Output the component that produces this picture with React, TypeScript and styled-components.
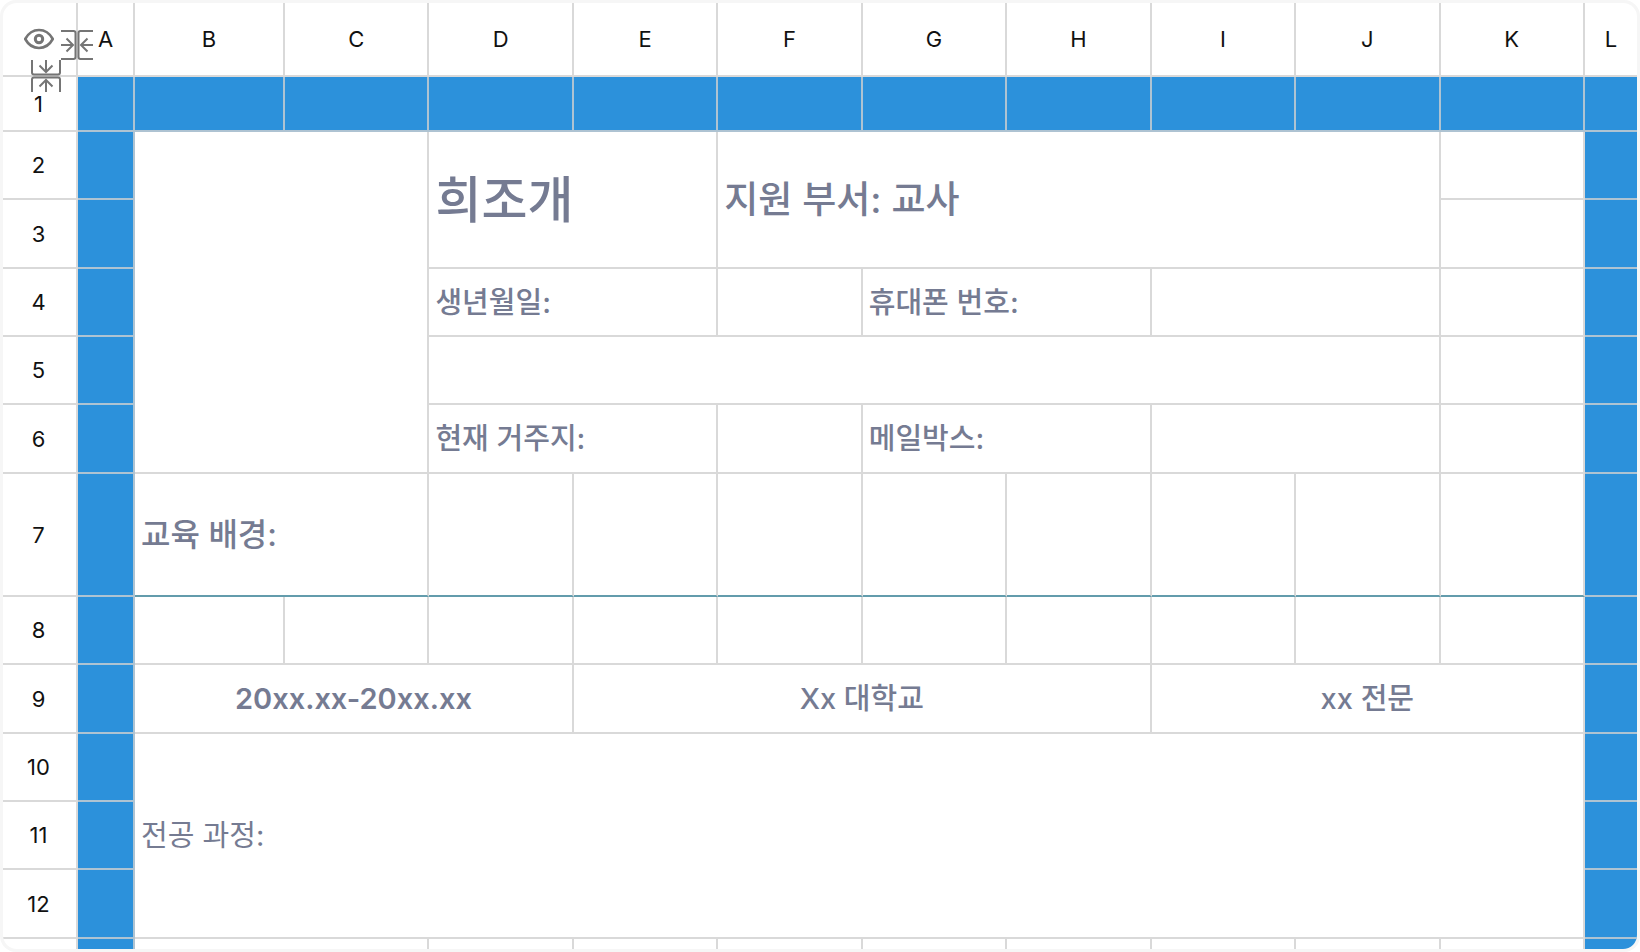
import React from "react";
import styled, { createGlobalStyle } from "styled-components";

const LINE = "rgba(208, 208, 208, 0.8)";
const BLUE = "#2c91db";
const INK = "#757b92";

const GlobalStyle = createGlobalStyle`
  *, *::before, *::after { box-sizing: border-box; }
  body {
    margin: 0;
    background: #ffffff;
    font-family: Inter, "Noto Sans CJK KR", sans-serif;
  }
`;

const Frame = styled.main`
  height: 100vh;
  padding: 3px;
  background: #f6f6f6;
  border-radius: 16px;
`;

const Viewport = styled.div`
  position: relative;
  height: 100%;
  overflow: hidden;
  background: #ffffff;
  border-radius: 14px;
`;

const Sheet = styled.table`
  width: 100%;
  table-layout: fixed;
  border-collapse: separate;
  border-spacing: 0;
`;

const Col = styled.col<{ $w?: number }>`
  width: ${(p) => (p.$w ? `${p.$w}px` : "auto")};
`;

const Row = styled.tr<{ $h: number }>`
  height: ${(p) => p.$h}px;
`;

const Head = styled.th`
  padding: 0;
  border-right: 2px solid ${LINE};
  border-bottom: 2px solid ${LINE};
  color: #111111;
  font-size: 22px;
  font-weight: 400;
  line-height: 28px;
  text-align: center;
  &:first-child { padding-right: 2px; }
  &:last-child { border-right: 0; }
`;

const Cell = styled.td<{ $fill?: boolean; $rule?: boolean; $center?: boolean; $size?: number; $weight?: number }>`
  padding: 0 6px;
  border-right: 2px solid ${LINE};
  border-bottom: 2px solid ${(p) => (p.$rule ? "#639cac" : LINE)};
  background: ${(p) => (p.$fill ? BLUE : "transparent")};
  color: ${INK};
  font-size: ${(p) => p.$size ?? 29}px;
  font-weight: ${(p) => p.$weight ?? 500};
  line-height: 1;
  text-align: ${(p) => (p.$center ? "center" : "left")};
  white-space: nowrap;
  &:last-child { border-right: 0; }
`;

const IconButton = styled.button`
  display: block;
  padding: 0;
  border: 0;
  background: none;
  color: #757575;
  cursor: pointer;
  svg { display: block; }
`;

const EyeButton = styled(IconButton)`
  margin: 0 auto;
`;

const ColumnHandle = styled(IconButton)`
  position: absolute;
  left: 58px;
  top: 26px;
`;

const RowHandle = styled(IconButton)`
  position: absolute;
  left: 27px;
  top: 57px;
`;

const EyeIcon = () => (
  <svg width="32" height="24" viewBox="0 0 32 24" fill="none" stroke="currentColor" strokeWidth="2.6" strokeLinejoin="round">
    <path d="M2.2 12C5.5 6 10.2 3 16 3s10.500 3 13.800 9C26.500 18 21.800 21 16 21S5.500 18 2.200 12Z" />
    <circle cx="16" cy="12" r="3.700" strokeWidth="3" />
  </svg>
);

const CollapseIcon = ({ turned }: { turned?: boolean }) => (
  <svg width="32" height="32" viewBox="0 0 32 32" fill="none" stroke="currentColor" strokeWidth="2">
    <g transform={turned ? "rotate(90 16 16)" : undefined}>
      <path d="M0 2h12.500q2 0 2 2v24q0 2-2 2H0" />
      <path d="M32 2H19.500q-2 0-2 2v24q0 2 2 2h12.500" />
      <path d="M0 16h12M5.500 9.500l6.500 6.500-6.500 6.500" />
      <path d="M32 16H20M26.500 9.500L20 16l6.500 6.500" />
    </g>
  </svg>
);

interface CellData {
  text?: string;
  cols?: number;
  rows?: number;
  fill?: boolean;
  rule?: boolean;
  center?: boolean;
  size?: number;
  weight?: number;
}

interface RowData {
  height: number;
  label?: string;
  cells: CellData[];
}

const blanks = (n: number, extra: CellData = {}): CellData[] => Array.from({ length: n }, () => extra);
const side: CellData = { fill: true };

const columns = "ABCDEFGHIJKL".split("");

const rows: RowData[] = [
  { height: 55, label: "1", cells: blanks(12, side) },
  {
    height: 68,
    label: "2",
    cells: [
      side,
      { cols: 2, rows: 5 },
      { text: "희조개", cols: 2, rows: 2, size: 50 },
      { text: "지원 부서: 교사", cols: 5, rows: 2, size: 37 },
      {},
      side,
    ],
  },
  { height: 69, label: "3", cells: [side, {}, side] },
  {
    height: 68,
    label: "4",
    cells: [side, { text: "생년월일:", cols: 2 }, {}, { text: "휴대폰 번호:", cols: 2 }, { cols: 2 }, {}, side],
  },
  { height: 68, label: "5", cells: [side, { cols: 7 }, {}, side] },
  {
    height: 69,
    label: "6",
    cells: [side, { text: "현재 거주지:", cols: 2 }, {}, { text: "메일박스:", cols: 2 }, { cols: 2 }, {}, side],
  },
  {
    height: 123,
    label: "7",
    cells: [side, { text: "교육 배경:", cols: 2, rule: true, size: 32 }, ...blanks(8, { rule: true }), side],
  },
  { height: 68, label: "8", cells: [side, ...blanks(10), side] },
  {
    height: 69,
    label: "9",
    cells: [
      side,
      { text: "20xx.xx-20xx.xx", cols: 3, center: true, weight: 600 },
      { text: "Xx 대학교", cols: 4, center: true },
      { text: "xx 전문", cols: 3, center: true },
      side,
    ],
  },
  { height: 68, label: "10", cells: [side, { text: "전공 과정:", cols: 10, rows: 3, weight: 400 }, side] },
  { height: 68, label: "11", cells: [side, side] },
  { height: 69, label: "12", cells: [side, side] },
  { height: 68, cells: [side, { cols: 2 }, ...blanks(8), side] },
];

export default function App() {
  return (
    <>
      <GlobalStyle />
      <Frame>
        <Viewport>
          <Sheet>
            <colgroup>
              <Col $w={75} />
              <Col $w={57} />
              <Col $w={150} />
              {columns.slice(2, 11).map((c) => (
                <Col key={c} />
              ))}
              <Col $w={52} />
            </colgroup>
            <thead>
              <Row $h={74}>
                <Head>
                  <EyeButton type="button" aria-label="보기">
                    <EyeIcon />
                  </EyeButton>
                </Head>
                {columns.map((c) => (
                  <Head key={c} scope="col">
                    {c}
                  </Head>
                ))}
              </Row>
            </thead>
            <tbody>
              {rows.map((row, r) => (
                <Row key={r} $h={row.height}>
                  <Head scope="row">{row.label}</Head>
                  {row.cells.map((cell, i) => (
                    <Cell
                      key={i}
                      colSpan={cell.cols}
                      rowSpan={cell.rows}
                      $fill={cell.fill}
                      $rule={cell.rule}
                      $center={cell.center}
                      $size={cell.size}
                      $weight={cell.weight}
                    >
                      {cell.text}
                    </Cell>
                  ))}
                </Row>
              ))}
            </tbody>
          </Sheet>
          <ColumnHandle type="button" aria-label="열 접기">
            <CollapseIcon />
          </ColumnHandle>
          <RowHandle type="button" aria-label="행 접기">
            <CollapseIcon turned />
          </RowHandle>
        </Viewport>
      </Frame>
    </>
  );
}
